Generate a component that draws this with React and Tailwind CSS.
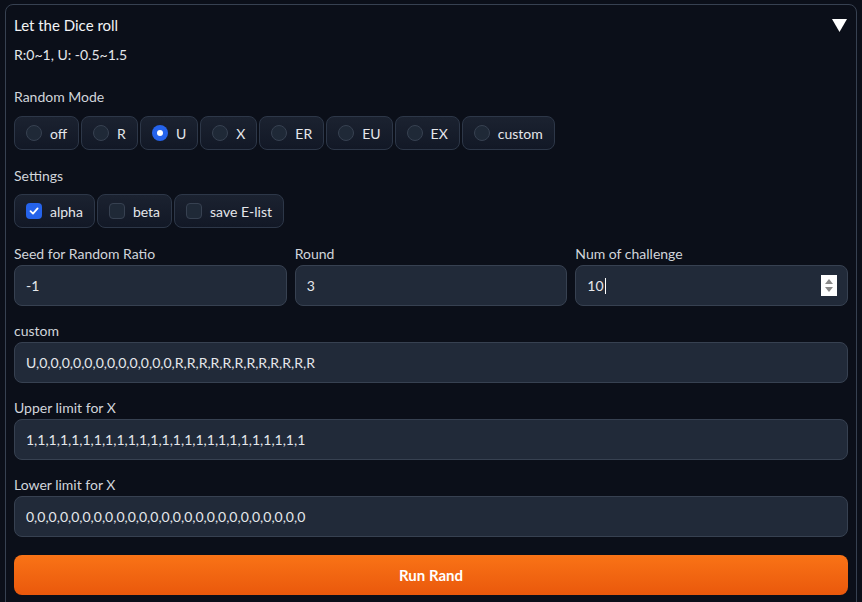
import { useState } from 'react';

const modes = ['off', 'R', 'U', 'X', 'ER', 'EU', 'EX', 'custom'];

const Label = ({ children }) => (
  <div className="text-[14px] leading-5 text-[#d1d5db] mb-[1px]">{children}</div>
);

const TextBox = ({ label, value, spinner }) => (
  <div className="flex flex-col flex-1">
    <Label>{label}</Label>
    <div className="relative h-[41px] rounded-lg border border-[#374151] bg-[#212a39] flex items-center px-[11px] text-[14px] text-[#e5e7eb]">
      <span>{value}</span>
      {spinner && (
        <>
          <span className="w-[1px] h-[16px] bg-white ml-[1px]"></span>
          <div className="absolute right-[10px] top-[9px] w-[16px] h-[21px] bg-white flex flex-col items-center justify-center gap-[3px]">
            <svg width="8" height="5" viewBox="0 0 8 5"><polygon points="4,0 8,5 0,5" fill="#8a8a8a" /></svg>
            <svg width="8" height="5" viewBox="0 0 8 5"><polygon points="0,0 8,0 4,5" fill="#8a8a8a" /></svg>
          </div>
        </>
      )}
    </div>
  </div>
);

const Chip = ({ children }) => (
  <label className="h-[34px] flex items-center gap-2 px-[11px] rounded-lg border border-[#2d3748] bg-gradient-to-b from-[#1b2230] to-[#121826] text-[14px] text-[#e5e7eb] cursor-pointer">
    {children}
  </label>
);

export default function App() {
  const [mode, setMode] = useState('U');
  const [opts, setOpts] = useState({ alpha: true, beta: false, 'save E-list': false });

  return (
    <div className="min-h-screen bg-[#0b0f19] pt-[4px] pl-[5px]" style={{ fontFamily: 'Lato, "Noto Sans", sans-serif' }}>
      <div className="w-[852px] h-[610px] rounded-lg border border-[#374151] px-2 pt-[9px]">
        <div className="flex items-center justify-between h-[22px]">
          <div className="text-[15px] text-[#f3f4f6]">Let the Dice roll</div>
          <svg width="15" height="13" viewBox="0 0 15 13" className="mr-[1px]">
            <polygon points="0,0 15,0 7.5,13" fill="#ffffff" />
          </svg>
        </div>
        <div className="mt-[9px] text-[14px] leading-5 text-[#e5e7eb]">R:0~1, U: -0.5~1.5</div>

        <div className="mt-[22px]">
          <div className="text-[14px] leading-5 text-[#d1d5db] mb-[9px]">Random Mode</div>
          <div className="flex gap-[2px]">
            {modes.map((m) => (
              <Chip key={m}>
                <span
                  onClick={() => setMode(m)}
                  className={
                    mode === m
                      ? 'w-4 h-4 rounded-full bg-[#2563eb] flex items-center justify-center'
                      : 'w-4 h-4 rounded-full bg-[#1f2937] border border-[#374151]'
                  }
                >
                  {mode === m && <span className="w-[6px] h-[6px] rounded-full bg-white"></span>}
                </span>
                <span>{m}</span>
              </Chip>
            ))}
          </div>
        </div>

        <div className="mt-[16px]">
          <div className="text-[14px] leading-5 text-[#d1d5db] mb-[8px]">Settings</div>
          <div className="flex gap-[2px]">
            {Object.keys(opts).map((k) => (
              <Chip key={k}>
                <span
                  onClick={() => setOpts({ ...opts, [k]: !opts[k] })}
                  className={
                    opts[k]
                      ? 'w-4 h-4 rounded-[4px] bg-[#2563eb] flex items-center justify-center'
                      : 'w-4 h-4 rounded-[4px] bg-[#1f2937] border border-[#374151]'
                  }
                >
                  {opts[k] && (
                    <svg width="10" height="10" viewBox="0 0 10 10">
                      <path d="M1.5 5.2 L4 7.6 L8.6 2.4" stroke="white" strokeWidth="1.8" fill="none" strokeLinecap="round" strokeLinejoin="round" />
                    </svg>
                  )}
                </span>
                <span>{k}</span>
              </Chip>
            ))}
          </div>
        </div>

        <div className="mt-[16px] flex gap-2">
          <TextBox label="Seed for Random Ratio" value="-1" />
          <TextBox label="Round" value="3" />
          <TextBox label="Num of challenge" value="10" spinner />
        </div>

        <div className="mt-[15px] flex flex-col gap-[15px]">
          <TextBox label="custom" value="U,0,0,0,0,0,0,0,0,0,0,0,0,R,R,R,R,R,R,R,R,R,R,R,R" />
          <TextBox label="Upper limit for X" value="1,1,1,1,1,1,1,1,1,1,1,1,1,1,1,1,1,1,1,1,1,1,1,1,1" />
          <TextBox label="Lower limit for X" value="0,0,0,0,0,0,0,0,0,0,0,0,0,0,0,0,0,0,0,0,0,0,0,0,0" />
        </div>

        <button className="mt-[18px] w-full h-[40px] rounded-lg bg-gradient-to-b from-[#f97316] to-[#ea580c] text-white font-bold text-[15px]">
          Run Rand
        </button>
      </div>
    </div>
  );
}
